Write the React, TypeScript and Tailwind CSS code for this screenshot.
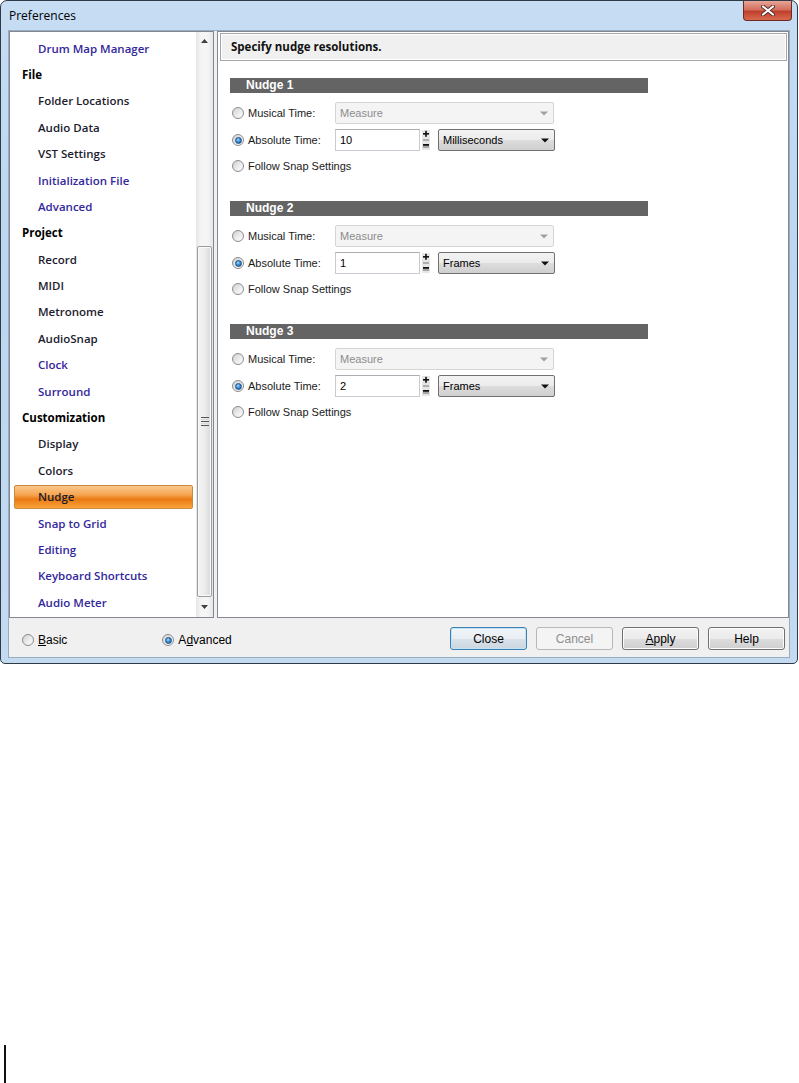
import React from "react";

const LIST: { t: string; k: "cat" | "dark" | "blue" }[] = [
  { t: "Drum Map Manager", k: "blue" },
  { t: "File", k: "cat" },
  { t: "Folder Locations", k: "dark" },
  { t: "Audio Data", k: "dark" },
  { t: "VST Settings", k: "dark" },
  { t: "Initialization File", k: "blue" },
  { t: "Advanced", k: "blue" },
  { t: "Project", k: "cat" },
  { t: "Record", k: "dark" },
  { t: "MIDI", k: "dark" },
  { t: "Metronome", k: "dark" },
  { t: "AudioSnap", k: "dark" },
  { t: "Clock", k: "blue" },
  { t: "Surround", k: "blue" },
  { t: "Customization", k: "cat" },
  { t: "Display", k: "dark" },
  { t: "Colors", k: "dark" },
  { t: "Nudge", k: "dark" },
  { t: "Snap to Grid", k: "blue" },
  { t: "Editing", k: "blue" },
  { t: "Keyboard Shortcuts", k: "blue" },
  { t: "Audio Meter", k: "blue" },
];

function Radio({ checked }: { checked?: boolean }) {
  return (
    <div className="w-[12px] h-[12px] shrink-0 rounded-full border border-[#8a8c8e] bg-[linear-gradient(135deg,#cfd0d2_0%,#ececec_55%,#ffffff_100%)] flex items-center justify-center">
      {checked && (
        <div className="w-[7px] h-[7px] rounded-full border border-[#1b4f85] bg-[radial-gradient(circle_at_40%_35%,#a9dcff_0%,#3d8fd6_45%,#14518f_100%)]" />
      )}
    </div>
  );
}

function Arrow({ color }: { color: string }) {
  return (
    <svg width="8" height="5" viewBox="0 0 8 5">
      <path d="M0 0.5 L8 0.5 L4 4.5 Z" fill={color} />
    </svg>
  );
}

function Section({ title, value, unit }: { title: string; value: string; unit: string }) {
  return (
    <div className="flex flex-col w-[418px]">
      <div className="h-[15px] bg-[#646464] text-white font-bold text-[12px] leading-[15px] pl-[16px] font-['Liberation_Sans',Arial,sans-serif]">
        {title}
      </div>
      <div className="mt-[9px] h-[22px] flex items-center pl-[2px]">
        <Radio />
        <span className="ml-[4px] w-[87px]">Musical Time:</span>
        <div className="w-[219px] h-[22px] border border-[#d5d5d5] rounded-[2px] bg-[#f4f4f4] flex items-center justify-between pl-[4px] pr-[5px] text-[#8c8c8c]">
          <span>Measure</span>
          <Arrow color="#a0a0a0" />
        </div>
      </div>
      <div className="mt-[5px] h-[22px] flex items-center pl-[2px]">
        <Radio checked />
        <span className="ml-[4px] w-[87px]">Absolute Time:</span>
        <div className="w-[85px] h-[22px] border border-[#c8ccd2] border-t-[#abadb3] bg-white flex items-center pl-[4px] text-black">
          {value}
        </div>
        <svg className="ml-[2px]" width="8" height="22" viewBox="0 0 8 22">
          <rect x="0" y="1" width="8" height="20" fill="#e6e6e6" />
          <rect x="1" y="4" width="6" height="1.6" fill="#111" />
          <rect x="3.2" y="1.8" width="1.6" height="6" fill="#111" />
          <rect x="1" y="10.5" width="6" height="1" fill="#777" />
          <rect x="1" y="15" width="6" height="1.8" fill="#111" />
          <rect x="1" y="17.5" width="6" height="1" fill="#666" />
        </svg>
        <div className="ml-[8px] w-[117px] h-[22px] border border-[#707070] rounded-[2px] bg-[linear-gradient(to_bottom,#f3f3f3_0%,#ebebeb_50%,#dddddd_51%,#cfcfcf_100%)] flex items-center justify-between pl-[4px] pr-[5px] text-black">
          <span>{unit}</span>
          <Arrow color="#111" />
        </div>
      </div>
      <div className="mt-[4px] h-[22px] flex items-center pl-[2px]">
        <Radio />
        <span className="ml-[4px]">Follow Snap Settings</span>
      </div>
    </div>
  );
}

function Btn({ label, kind }: { label: React.ReactNode; kind?: "default" | "disabled" }) {
  const base =
    "w-[77px] h-[23px] rounded-[3px] flex items-center justify-center text-[12px] font-['Liberation_Sans',Arial,sans-serif]";
  if (kind === "disabled")
    return <div className={base + " border border-[#b5b8bb] bg-[#f4f4f4] text-[#8d8d8d]"}>{label}</div>;
  if (kind === "default")
    return (
      <div
        className={
          base +
          " border border-[#3c7fb1] bg-[linear-gradient(to_bottom,#f0f5f9_0%,#e9eef3_50%,#d9e2ea_51%,#cbd6df_100%)] shadow-[inset_0_0_0_1px_#c2e4f6] text-black"
        }
      >
        {label}
      </div>
    );
  return (
    <div
      className={
        base +
        " border border-[#707070] bg-[linear-gradient(to_bottom,#f2f2f2_0%,#ebebeb_50%,#dddddd_51%,#cfcfcf_100%)] shadow-[inset_0_0_0_1px_#fcfcfc] text-black"
      }
    >
      {label}
    </div>
  );
}

export default function App() {
  return (
    <div className="w-[799px] h-[1083px] bg-white flex flex-col font-['Liberation_Sans',Arial,sans-serif] text-[11px] text-[#1a1a1a]">
      <div className="w-[798px] h-[664px] rounded-t-[7px] rounded-b-[5px] border border-[#2f3a48] bg-[linear-gradient(to_bottom,#c6ddf3_0%,#bcd6ef_40%,#c3daf1_100%)] flex flex-col">
        {/* Title bar */}
        <div className="h-[29px] flex items-start justify-between pl-[8px] pr-[5px]">
          <span className="mt-[6px] text-[12px] text-black font-['Open_Sans',sans-serif]">Preferences</span>
          <div className="w-[49px] h-[20px] rounded-b-[4px] border border-t-0 border-[#6e2a22] bg-[linear-gradient(to_bottom,#e7a597_0%,#d3705e_45%,#c0402c_55%,#d86a50_100%)] flex items-center justify-center">
            <svg width="14" height="11" viewBox="0 0 14 11">
              <path d="M2 1.5 L12 9.5 M12 1.5 L2 9.5" stroke="#5a2a25" strokeWidth="4" strokeLinecap="round" />
              <path d="M2 1.5 L12 9.5 M12 1.5 L2 9.5" stroke="#ffffff" strokeWidth="2.2" strokeLinecap="round" />
            </svg>
          </div>
        </div>
        {/* Client */}
        <div className="mx-[7px] flex-1 border border-[#97acc3] bg-[#f0f0f0] flex flex-col">
          <div className="h-[587px] flex">
            {/* Left tree */}
            <div className="w-[205px] border border-[#828790] bg-white flex">
              <div className="flex-1 pt-[3px] flex flex-col font-['Open_Sans',sans-serif] text-[11.5px] font-semibold">
                {LIST.map((it) => {
                  const color =
                    it.k === "cat" ? "text-black font-bold" : it.k === "blue" ? "text-[#33279c]" : "text-[#1c1c2e]";
                  if (it.t === "Nudge")
                    return (
                      <div key={it.t} className="h-[26.4px] py-[1px] pl-[4px] pr-[3px] flex">
                        <div className="flex-1 rounded-[2px] border border-[#c98a3c] bg-[linear-gradient(to_bottom,#fbc78e_0%,#f6a550_40%,#ea7a12_60%,#fba43c_100%)] flex items-center pl-[23px] text-[#1c1c2e]">
                          Nudge
                        </div>
                      </div>
                    );
                  return (
                    <div
                      key={it.t}
                      className={"h-[26.4px] flex items-center " + (it.k === "cat" ? "pl-[12px] " : "pl-[28px] ") + color}
                    >
                      {it.t}
                    </div>
                  );
                })}
              </div>
              {/* Scrollbar */}
              <div className="w-[17px] bg-[linear-gradient(to_right,#e6e6e6,#f5f5f5_30%,#f5f5f5_70%,#e6e6e6)] flex flex-col">
                <div className="h-[17px] flex items-center justify-center">
                  <svg width="7" height="4" viewBox="0 0 7 4">
                    <path d="M0 4 L7 4 L3.5 0 Z" fill="#404040" />
                  </svg>
                </div>
                <div className="h-[197px]" />
                <div className="h-[351px] mx-[1px] rounded-[2px] border border-[#9c9c9c] bg-[linear-gradient(to_right,#f4f4f4_0%,#ececec_50%,#d9d9d9_100%)] shadow-[inset_0_0_0_1px_#fafafa] flex items-center justify-center">
                  <div className="flex flex-col gap-[1px]">
                    <div className="w-[8px] h-[1px] bg-[#555]" />
                    <div className="w-[8px] h-[1px] bg-[#dadada]" />
                    <div className="w-[8px] h-[1px] bg-[#555]" />
                    <div className="w-[8px] h-[1px] bg-[#dadada]" />
                    <div className="w-[8px] h-[1px] bg-[#555]" />
                  </div>
                </div>
                <div className="flex-1 flex items-center justify-center">
                  <svg width="7" height="4" viewBox="0 0 7 4">
                    <path d="M0 0 L7 0 L3.5 4 Z" fill="#404040" />
                  </svg>
                </div>
              </div>
            </div>
            {/* Right pane */}
            <div className="ml-[3px] flex-1 border border-[#828790] bg-white flex flex-col">
              <div className="mt-[1px] ml-[2px] mr-[1px] h-[28px] border border-[#a5a5a5] shadow-[inset_0_0_0_1px_#ffffff] bg-[#f0f0f0] flex items-center pl-[10px] font-['Open_Sans',sans-serif] text-[11.5px] font-bold text-[#111]">
                Specify nudge resolutions.
              </div>
              <div className="mt-[17px] ml-[12px] flex flex-col gap-[24px]">
                <Section title="Nudge 1" value="10" unit="Milliseconds" />
                <Section title="Nudge 2" value="1" unit="Frames" />
                <Section title="Nudge 3" value="2" unit="Frames" />
              </div>
            </div>
          </div>
          {/* Bottom bar */}
          <div className="flex-1 flex items-start text-[12px] text-black">
            <div className="mt-[13px] ml-[13px] flex items-center">
              <Radio />
              <span className="ml-[4px]">
                <u>B</u>asic
              </span>
            </div>
            <div className="mt-[13px] ml-[95px] flex items-center">
              <Radio checked />
              <span className="ml-[4px]">
                A<u>d</u>vanced
              </span>
            </div>
            <div className="ml-auto mr-[4px] mt-[9px] flex gap-[9px]">
              <Btn label="Close" kind="default" />
              <Btn label="Cancel" kind="disabled" />
              <Btn
                label={
                  <span>
                    <u>A</u>pply
                  </span>
                }
              />
              <Btn label="Help" />
            </div>
          </div>
        </div>
        <div className="h-[5px]" />
      </div>
      <div className="mt-auto ml-[4px] w-[2px] h-[38px] bg-[#111]" />
    </div>
  );
}
